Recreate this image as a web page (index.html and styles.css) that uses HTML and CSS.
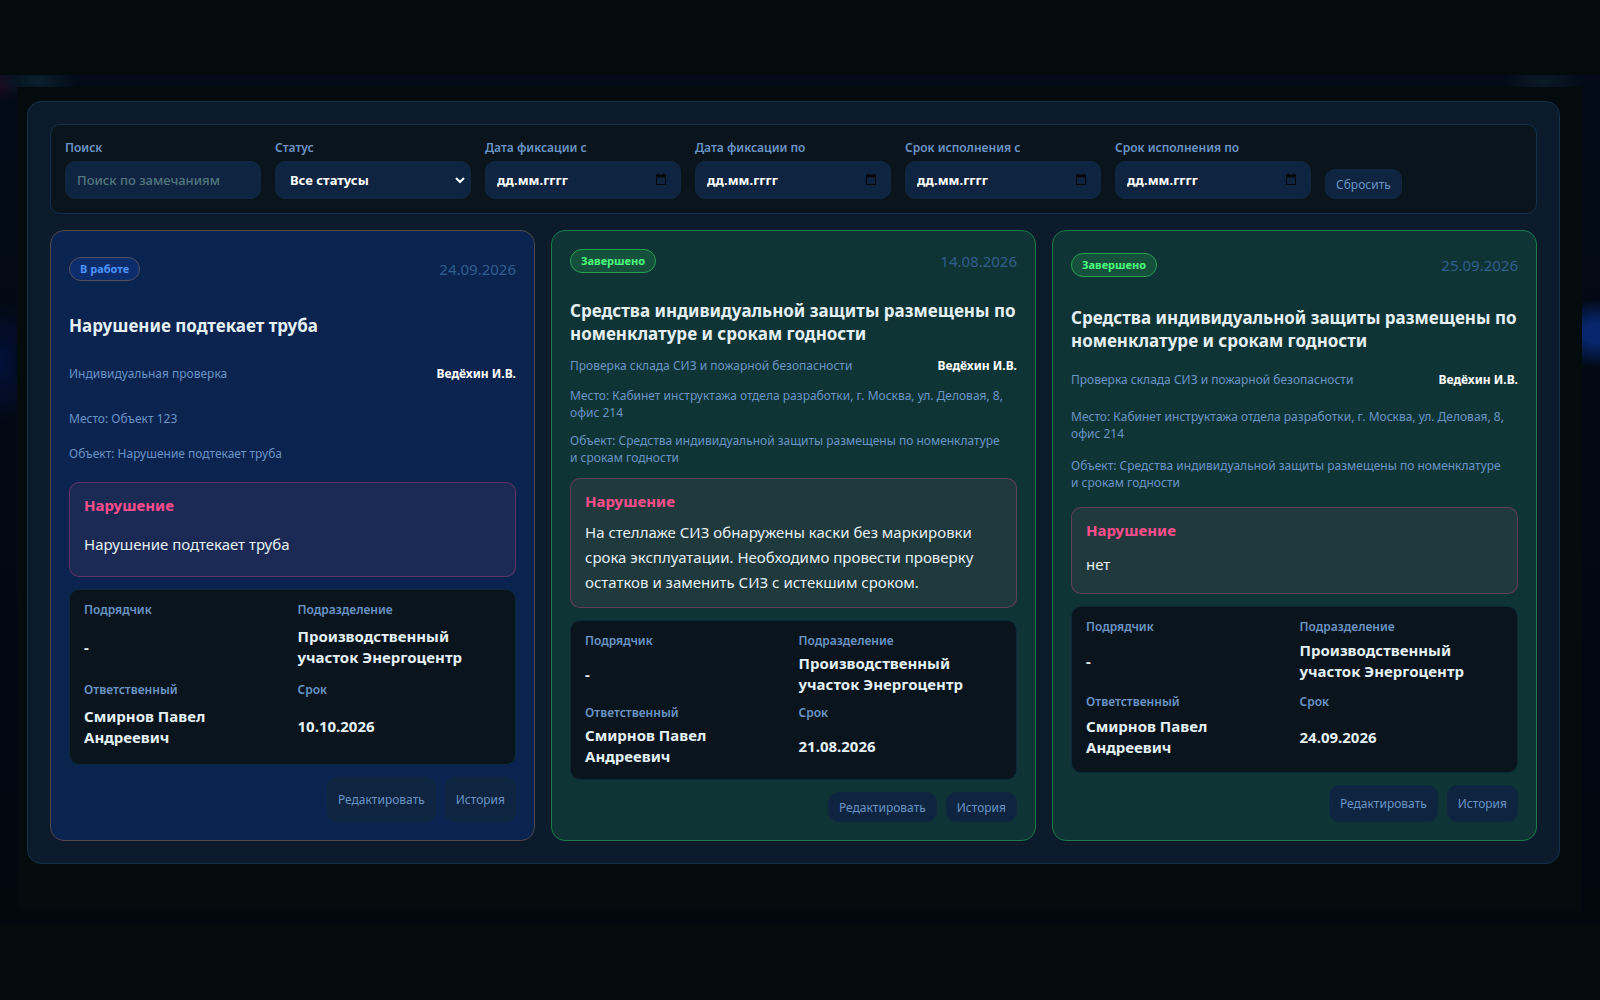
FILE: index.html
```html
<!DOCTYPE html>
<html lang="ru">
<head>
    <meta charset="UTF-8">
    <title>Замечания</title>
    <link rel="stylesheet" href="styles.css">
</head>
<body>
    <div class="backdrop">
        <main class="page">
            <section class="panel">
                <form class="filters">
                    <div class="field">
                        <label for="search">Поиск</label>
                        <input id="search" type="text" placeholder="Поиск по замечаниям">
                    </div>
                    <div class="field">
                        <label for="status">Статус</label>
                        <div class="select-wrap">
                            <select id="status">
                                <option>Все статусы</option>
                                <option>В работе</option>
                                <option>Завершено</option>
                            </select>
                            <svg class="chevron" viewBox="0 0 12 12"><path d="M2 4l4 4 4-4"/></svg>
                        </div>
                    </div>
                    <div class="field">
                        <label for="fixed-from">Дата фиксации с</label>
                        <div class="date-wrap">
                            <input id="fixed-from" type="text" value="дд.мм.гггг">
                            <svg class="calendar" viewBox="0 0 12 12"><path d="M1 1h1.5V0H4v1h4V0h1.500v1H11v10.500H1zM2 4v6.500h8V4z"/></svg>
                        </div>
                    </div>
                    <div class="field">
                        <label for="fixed-to">Дата фиксации по</label>
                        <div class="date-wrap">
                            <input id="fixed-to" type="text" value="дд.мм.гггг">
                            <svg class="calendar" viewBox="0 0 12 12"><path d="M1 1h1.5V0H4v1h4V0h1.500v1H11v10.500H1zM2 4v6.500h8V4z"/></svg>
                        </div>
                    </div>
                    <div class="field">
                        <label for="due-from">Срок исполнения с</label>
                        <div class="date-wrap">
                            <input id="due-from" type="text" value="дд.мм.гггг">
                            <svg class="calendar" viewBox="0 0 12 12"><path d="M1 1h1.5V0H4v1h4V0h1.500v1H11v10.500H1zM2 4v6.500h8V4z"/></svg>
                        </div>
                    </div>
                    <div class="field">
                        <label for="due-to">Срок исполнения по</label>
                        <div class="date-wrap">
                            <input id="due-to" type="text" value="дд.мм.гггг">
                            <svg class="calendar" viewBox="0 0 12 12"><path d="M1 1h1.5V0H4v1h4V0h1.500v1H11v10.500H1zM2 4v6.500h8V4z"/></svg>
                        </div>
                    </div>
                    <button class="btn" type="reset">Сбросить</button>
                </form>

                <div class="cards">
                    <article class="card in-work">
                        <header class="card-head">
                            <span class="badge">В работе</span>
                            <time>24.09.2026</time>
                        </header>
                        <h3>Нарушение подтекает труба</h3>
                        <div class="meta">
                            <span>Индивидуальная проверка</span>
                            <strong>Ведёхин И.В.</strong>
                        </div>
                        <div class="place">
                            <p>Место: Объект 123</p>
                            <p>Объект: Нарушение подтекает труба</p>
                        </div>
                        <div class="violation">
                            <h4>Нарушение</h4>
                            <p>Нарушение подтекает труба</p>
                        </div>
                        <dl class="info">
                            <div><dt>Подрядчик</dt><dd>-</dd></div>
                            <div><dt>Подразделение</dt><dd>Производственный участок Энергоцентр</dd></div>
                            <div><dt>Ответственный</dt><dd>Смирнов Павел Андреевич</dd></div>
                            <div><dt>Срок</dt><dd>10.10.2026</dd></div>
                        </dl>
                        <footer class="actions">
                            <button class="btn" type="button">Редактировать</button>
                            <button class="btn" type="button">История</button>
                        </footer>
                    </article>

                    <article class="card done">
                        <header class="card-head">
                            <span class="badge">Завершено</span>
                            <time>14.08.2026</time>
                        </header>
                        <h3>Средства индивидуальной защиты размещены по номенклатуре и срокам годности</h3>
                        <div class="meta">
                            <span>Проверка склада СИЗ и пожарной безопасности</span>
                            <strong>Ведёхин И.В.</strong>
                        </div>
                        <div class="place">
                            <p>Место: Кабинет инструктажа отдела разработки, г. Москва, ул. Деловая, 8, офис 214</p>
                            <p>Объект: Средства индивидуальной защиты размещены по номенклатуре и&nbsp;срокам годности</p>
                        </div>
                        <div class="violation">
                            <h4>Нарушение</h4>
                            <p>На стеллаже СИЗ обнаружены каски без маркировки срока эксплуатации. Необходимо провести проверку остатков и заменить СИЗ с истекшим сроком.</p>
                        </div>
                        <dl class="info">
                            <div><dt>Подрядчик</dt><dd>-</dd></div>
                            <div><dt>Подразделение</dt><dd>Производственный участок Энергоцентр</dd></div>
                            <div><dt>Ответственный</dt><dd>Смирнов Павел Андреевич</dd></div>
                            <div><dt>Срок</dt><dd>21.08.2026</dd></div>
                        </dl>
                        <footer class="actions">
                            <button class="btn" type="button">Редактировать</button>
                            <button class="btn" type="button">История</button>
                        </footer>
                    </article>

                    <article class="card done">
                        <header class="card-head">
                            <span class="badge">Завершено</span>
                            <time>25.09.2026</time>
                        </header>
                        <h3>Средства индивидуальной защиты размещены по номенклатуре и срокам годности</h3>
                        <div class="meta">
                            <span>Проверка склада СИЗ и пожарной безопасности</span>
                            <strong>Ведёхин И.В.</strong>
                        </div>
                        <div class="place">
                            <p>Место: Кабинет инструктажа отдела разработки, г. Москва, ул. Деловая, 8, офис 214</p>
                            <p>Объект: Средства индивидуальной защиты размещены по номенклатуре и&nbsp;срокам годности</p>
                        </div>
                        <div class="violation">
                            <h4>Нарушение</h4>
                            <p>нет</p>
                        </div>
                        <dl class="info">
                            <div><dt>Подрядчик</dt><dd>-</dd></div>
                            <div><dt>Подразделение</dt><dd>Производственный участок Энергоцентр</dd></div>
                            <div><dt>Ответственный</dt><dd>Смирнов Павел Андреевич</dd></div>
                            <div><dt>Срок</dt><dd>24.09.2026</dd></div>
                        </dl>
                        <footer class="actions">
                            <button class="btn" type="button">Редактировать</button>
                            <button class="btn" type="button">История</button>
                        </footer>
                    </article>
                </div>
            </section>
        </main>
    </div>
</body>
</html>
```

FILE: styles.css
```css
:root {
    --bg: #030b0d;
    --panel: #0b1b2c;
    --box: #09141d;
    --field: #0e2440;
    --line: #12304a;
    --text: #e4f0f4;
    --muted: #6a94c4;
    --pink: #ff4d8d;
    --green: #4dff7c;
    --blue: #4d94ff;
}

* {
    box-sizing: border-box;
}

body {
    margin: 0;
    padding: 75px 0;
    min-height: 100vh;
    background: var(--bg);
    color: var(--text);
    font-family: "Noto Sans", sans-serif;
    font-size: 15px;
}

h3, h4, p, dl, dd {
    margin: 0;
}

.backdrop {
    padding: 12px 18px 14px 17px;
    background:
        radial-gradient(ellipse 60px 34px at 100% 258px, #06256b 30%, transparent),
        radial-gradient(ellipse 40px 60px at 0 288px, #03103a, transparent),
        radial-gradient(ellipse 40px 16px at 38px 6px, #0b2130, transparent),
        radial-gradient(ellipse 40px 16px at 1543px 6px, #0b1b28, transparent),
        radial-gradient(ellipse 20px 20px at 0 10px, #1a0b20, transparent),
        linear-gradient(#020b17, #020713 70%, #02080e);
}

.page {
    padding: 14px 22px 47px 10px;
    background: var(--bg);
}

.panel {
    padding: 22px;
    background: var(--panel);
    border: 1px solid var(--line);
    border-radius: 14px;
}

.filters {
    display: grid;
    grid-template-columns: repeat(6, 196px) auto;
    justify-content: start;
    align-items: end;
    gap: 14px;
    padding: 14px;
    margin-bottom: 16px;
    background: var(--box);
    border: 1px solid var(--line);
    border-radius: 10px;
}

.field {
    display: grid;
    gap: 4px;
}

.field label {
    color: var(--muted);
    font-size: 12px;
    font-weight: 600;
    line-height: 18px;
}

.field input, .field select {
    display: block;
    width: 100%;
    height: 38px;
    padding: 0 11px;
    background: var(--field);
    border: 1px solid #10283f;
    border-radius: 10px;
    color: #fff;
    font: 700 13px "Noto Sans", sans-serif;
    outline: none;
}

.field input::placeholder {
    color: #54777f;
    font-weight: 500;
}

.field select {
    appearance: none;
    padding: 0 14px;
}

.select-wrap, .date-wrap {
    position: relative;
}

.chevron, .calendar {
    position: absolute;
    pointer-events: none;
}

.chevron {
    width: 12px;
    height: 12px;
    right: 5px;
    top: 13px;
    fill: none;
    stroke: #fff;
    stroke-width: 2;
}

.calendar {
    width: 12px;
    height: 13px;
    right: 14px;
    top: 12px;
    fill: #05090c;
    fill-rule: evenodd;
}

.btn {
    min-height: 30px;
    padding: 0 10px;
    background: var(--field);
    border: 1px solid #10283f;
    border-radius: 10px;
    color: var(--muted);
    font: 400 12px "Noto Sans", sans-serif;
}

.cards {
    display: grid;
    grid-template-columns: repeat(3, 1fr);
    gap: 16px;
}

/* rows share the spare height so all the cards end level */
.card {
    display: grid;
    gap: 12px;
    padding: 18px;
    border: 1px solid;
    border-radius: 14px;
}

.card.in-work {
    background: #0a234f;
    border-color: #52474b;
}

.card.done {
    background: #0f3436;
    border-color: #1c7a48;
}

.card-head {
    display: flex;
    justify-content: space-between;
    align-items: center;
}

.badge {
    padding: 0 10px;
    border: 1px solid;
    border-radius: 12px;
    font-size: 11px;
    font-weight: 700;
    line-height: 22px;
}

.in-work .badge {
    background: #0c2c6c;
    border-color: #52505c;
    color: var(--blue);
}

.done .badge {
    background: #14503c;
    border-color: #24a050;
    color: var(--green);
}

.card-head time {
    color: #2f5f8c;
    line-height: 24px;
}

.card h3 {
    padding-top: 14px;
    font-size: 17px;
    font-weight: 700;
    line-height: 23px;
}

.meta {
    display: flex;
    justify-content: space-between;
    gap: 12px;
    color: var(--muted);
    font-size: 12px;
    line-height: 18px;
}

.meta strong {
    color: #fff;
}

.place {
    display: grid;
    gap: 11px;
    color: var(--muted);
    font-size: 12px;
    line-height: 17px;
}

.violation {
    display: grid;
    gap: 8px;
    padding: 12px 14px;
    background: rgba(235, 125, 150, 0.08);
    border: 1px solid rgba(255, 77, 141, 0.3);
    border-radius: 10px;
}

.violation h4 {
    color: var(--pink);
    font-size: 15px;
    line-height: 21px;
}

.violation p {
    line-height: 25px;
}

.info {
    display: grid;
    grid-template-columns: 1fr 1fr;
    gap: 10px;
    padding: 12px 14px;
    background: var(--box);
    border: 1px solid #0d2a3c;
    border-radius: 10px;
}

.info div {
    display: grid;
    gap: 4px;
}

.info dt {
    color: var(--muted);
    font-size: 12px;
    font-weight: 600;
    line-height: 16px;
}

.info dd {
    font-weight: 700;
    line-height: 21px;
}

.actions {
    display: flex;
    justify-content: flex-end;
    gap: 9px;
}
```
